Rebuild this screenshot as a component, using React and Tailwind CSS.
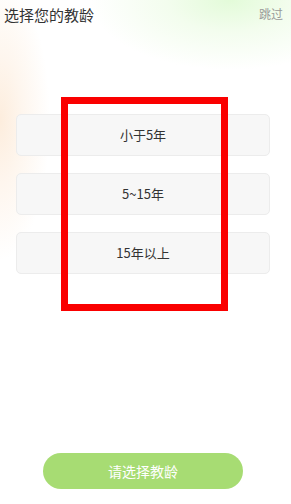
import React from 'react'

const options = ['小于5年', '5~15年', '15年以上']

const App = () => {
  return (
    <div
      className="relative flex flex-col w-full h-[504px] overflow-hidden bg-white bg-[radial-gradient(ellipse_140px_70px_at_230px_0px,#e3fbd9_0%,#f3fdee_45%,rgba(255,255,255,0)_100%),radial-gradient(ellipse_50px_140px_at_0px_120px,#fdeddd_0%,#fef6ee_45%,rgba(255,255,255,0)_100%)]"
      style={{ fontFamily: '"Noto Sans CJK SC", "Noto Sans", Roboto, sans-serif' }}
    >
      {/* Header */}
      <div className="flex items-center justify-between pl-[4px] pr-[8px] h-[28px]">
        <h1 className="text-[15px] leading-none text-[#333333]">选择您的教龄</h1>
        <span className="text-[12px] leading-none text-[#999999]">跳过</span>
      </div>

      {/* Options */}
      <div className="flex flex-col gap-[17px] pl-[16px] pr-[21px] pt-[86px]">
        {options.map((o) => (
          <button
            key={o}
            className="h-[42px] w-full rounded-[5px] bg-[#f7f7f7] border border-[#ececec] text-[13px] text-[#333333]"
          >
            {o}
          </button>
        ))}
      </div>

      {/* Red highlight overlay */}
      <div className="absolute left-[61px] top-[97px] w-[167px] h-[214px] border-[7px] border-[#fa0000] pointer-events-none" />

      {/* Bottom button */}
      <div className="mt-auto mb-[15px] pl-[43px]">
        <button className="w-[200px] h-[36px] rounded-full bg-[#a7dc73] text-white text-[14px]">
          请选择教龄
        </button>
      </div>
    </div>
  )
}

export default App
